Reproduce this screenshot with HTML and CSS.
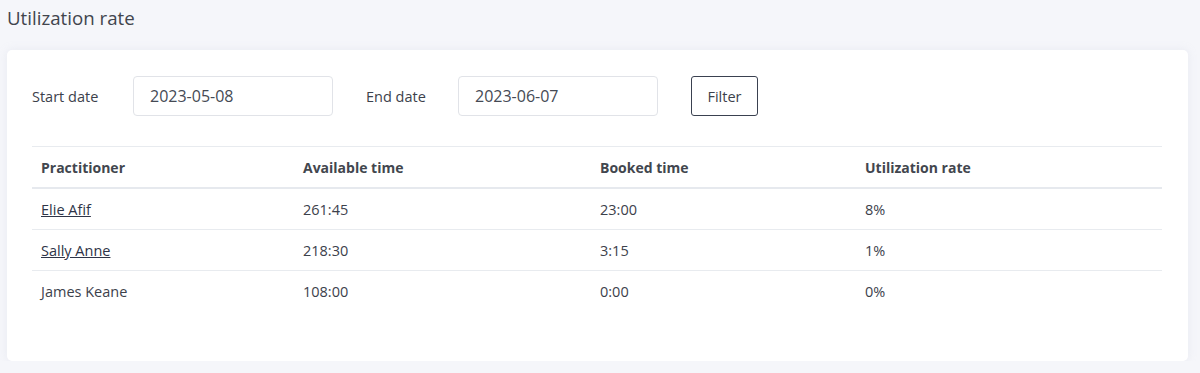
FILE: index.html
```html
<!DOCTYPE html>
<html>
<head>
<meta charset="utf-8">
<link rel="stylesheet" href="styles.css">
</head>
<body>
<div class="page">
  <h1 class="title">Utilization rate</h1>
  <div class="card">
    <form class="filters">
      <label class="flabel start">Start date</label>
      <input class="finput" type="text" value="2023-05-08">
      <label class="flabel end">End date</label>
      <input class="finput" type="text" value="2023-06-07">
      <button class="fbtn" type="button">Filter</button>
    </form>
    <table class="tbl">
      <thead>
        <tr>
          <th class="c1">Practitioner</th>
          <th class="c2">Available time</th>
          <th class="c3">Booked time</th>
          <th class="c4">Utilization rate</th>
        </tr>
      </thead>
      <tbody>
        <tr><td><a class="lnk" href="#">Elie Afif</a></td><td>261:45</td><td>23:00</td><td>8%</td></tr>
        <tr><td><a class="lnk" href="#">Sally Anne</a></td><td>218:30</td><td>3:15</td><td>1%</td></tr>
        <tr class="last"><td>James Keane</td><td>108:00</td><td>0:00</td><td>0%</td></tr>
      </tbody>
    </table>
  </div>
</div>
</body>
</html>
```

FILE: styles.css
```css
html, body {
  margin: 0;
  padding: 0;
  background: #f5f6fa;
  font-family: "Open Sans", "Liberation Sans", sans-serif;
  color: #3c414b;
}
.page {
  padding: 5px 12px 0 7px;
}
.title {
  margin: 0;
  font-size: 18.7px;
  font-weight: 400;
  line-height: 26px;
  color: #41454d;
}
.card {
  margin-top: 19px;
  width: 1181px;
  height: 311px;
  box-sizing: border-box;
  background: #fff;
  border-radius: 5px;
  padding: 26px 26px 0 25px;
  box-shadow: 0 0 8px rgba(200, 205, 220, 0.25);
}
.filters {
  display: flex;
  align-items: center;
  margin: 0;
  height: 40px;
}
.flabel {
  font-size: 14.5px;
  color: #3c414b;
}
.flabel.start { width: 101px; }
.flabel.end { width: 92px; }
.finput {
  box-sizing: border-box;
  width: 200px;
  height: 40px;
  border: 1px solid #e1e3e8;
  border-radius: 4px;
  padding: 0 16px;
  font-family: inherit;
  font-size: 16px;
  color: #454a54;
  outline: none;
  margin-right: 33px;
}
.fbtn {
  box-sizing: border-box;
  height: 40px;
  width: 67px;
  background: #fff;
  border: 1px solid #3a4150;
  border-radius: 3px;
  font-family: inherit;
  font-size: 14.5px;
  color: #3c414b;
  padding: 0;
}
.tbl {
  margin-top: 30px;
  width: 1130px;
  border-collapse: collapse;
  table-layout: fixed;
  font-size: 14.5px;
}
.tbl thead tr {
  border-top: 1px solid #e8ebef;
  border-bottom: 2px solid #e6e9ee;
}
.tbl th {
  text-align: left;
  font-weight: 700;
  font-size: 14px;
  color: #42464e;
  height: 40px;
  padding: 0 9px;
}
.tbl td {
  height: 40px;
  padding: 0 9px;
  color: #3c414b;
}
.tbl tbody tr {
  border-bottom: 1px solid #e8ebef;
}
.tbl tbody tr.last {
  border-bottom: none;
}
.c1 { width: 244px; }
.c2 { width: 279px; }
.c3 { width: 247px; }
.c4 { width: auto; }
.lnk {
  color: #2e3447;
  text-decoration: underline;
}
```
